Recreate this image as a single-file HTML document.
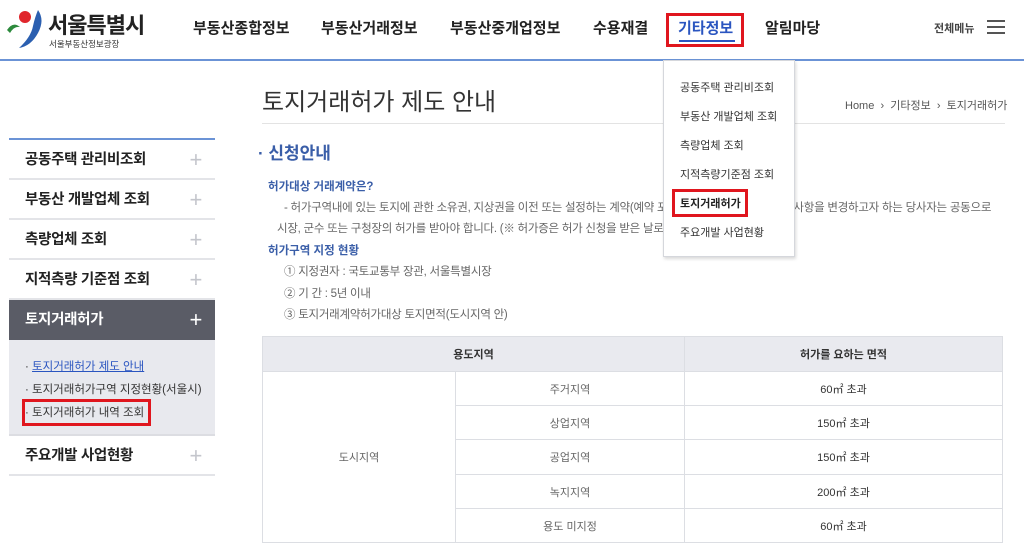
<!DOCTYPE html>
<html><head><meta charset="utf-8"><style>
*{margin:0;padding:0;box-sizing:border-box}
body{width:1024px;height:552px;overflow:hidden;background:#fff;font-family:"Liberation Sans","Noto Sans CJK KR",sans-serif;color:#333;position:relative}
.a{position:absolute;white-space:nowrap}
.nav{font-size:15px;font-weight:bold;color:#222;top:17px}
.side{position:absolute;left:9px;width:206px;height:40px;border-bottom:2px solid #e3e4e8;font-size:14.5px;font-weight:bold;color:#222;padding-left:16px;line-height:40px;letter-spacing:-0.3px}
.side .p{position:absolute;right:13px;top:0;color:#c4c6cc;font-weight:normal;font-size:22px}
.dd{font-size:11px;color:#333;left:680px}
.t{font-size:11.5px;color:#666;letter-spacing:-0.25px}
td{border:1px solid #dcdee3;text-align:center;font-size:11px;color:#666}
</style></head><body>
<!-- header -->
<svg class="a" style="left:4px;top:8px" width="46" height="42" viewBox="0 0 46 42">
<circle cx="21" cy="9" r="6" fill="#e0262c"/>
<path d="M3 22 Q9 13 16 19 Q10 18 6 25Z" fill="#2c8a3c"/>
<path d="M34 2 Q41 12 34 25 Q27 38 15 40 Q27 29 29 18 Q31 9 34 2Z" fill="#2b5fb0"/>
</svg>
<div class="a" style="left:48px;top:8px;font-size:22px;font-weight:bold;color:#222;letter-spacing:-1px">서울특별시</div>
<div class="a" style="left:49px;top:38px;font-size:8.5px;color:#333">서울부동산정보광장</div>
<div class="a nav" style="left:193px">부동산종합정보</div>
<div class="a nav" style="left:321px">부동산거래정보</div>
<div class="a nav" style="left:450px">부동산중개업정보</div>
<div class="a nav" style="left:593px">수용재결</div>
<div class="a nav" style="left:678px;color:#2a55c0">기타정보</div>
<div class="a" style="left:679px;top:40px;width:56px;height:2px;background:#2a55c0"></div>
<div class="a" style="left:666px;top:13px;width:78px;height:34px;border:3px solid #e0161e"></div>
<div class="a nav" style="left:765px">알림마당</div>
<div class="a" style="left:934px;top:20px;font-size:11px;font-weight:bold;color:#444">전체메뉴</div>
<div class="a" style="left:987px;top:20px;width:18px;height:2px;background:#555;box-shadow:0 6px 0 #555,0 12px 0 #555"></div>
<div class="a" style="left:0;top:59px;width:1024px;height:2px;background:#6b93d6"></div>
<!-- title -->
<div class="a" style="left:262px;top:82px;font-size:24px;color:#333">토지거래허가 제도 안내</div>
<div class="a" style="left:845px;top:97px;font-size:11px;color:#555">Home &nbsp;›&nbsp; 기타정보 &nbsp;›&nbsp; 토지거래허가</div>
<div class="a" style="left:262px;top:123px;width:743px;height:1px;background:#e3e3e3"></div>
<!-- sidebar -->
<div class="a" style="left:9px;top:138px;width:206px;height:2px;background:#6b93d6"></div>
<div class="side" style="top:140px">공동주택 관리비조회<span class="p">+</span></div>
<div class="side" style="top:180px">부동산 개발업체 조회<span class="p">+</span></div>
<div class="side" style="top:220px">측량업체 조회<span class="p">+</span></div>
<div class="side" style="top:260px">지적측량 기준점 조회<span class="p">+</span></div>
<div class="side" style="top:300px;background:#5a5c66;color:#fff;border-bottom:none">토지거래허가<span class="p" style="color:#fff">+</span></div>
<div class="a" style="left:9px;top:340px;width:206px;height:96px;background:#e8e9ee;border-bottom:2px solid #dcdde2"></div>
<div class="a" style="left:25px;top:358px;font-size:11.5px;color:#333">· <span style="color:#2a55c0;text-decoration:underline">토지거래허가 제도 안내</span></div>
<div class="a" style="left:25px;top:381px;font-size:11.5px;color:#333">· 토지거래허가구역 지정현황(서울시)</div>
<div class="a" style="left:25px;top:404px;font-size:11.5px;color:#333">· 토지거래허가 내역 조회</div>
<div class="a" style="left:22px;top:399px;width:129px;height:27px;border:3px solid #e0161e"></div>
<div class="side" style="top:436px">주요개발 사업현황<span class="p">+</span></div>
<!-- content -->
<div class="a" style="left:258px;top:139px;font-size:17px;font-weight:bold;color:#3a5ea8">· 신청안내</div>
<div class="a" style="left:268px;top:178px;font-size:11.5px;font-weight:bold;color:#3a5ea8">허가대상 거래계약은?</div>
<div class="a t" style="left:284px;top:199px">- 허가구역내에 있는 토지에 관한 소유권, 지상권을 이전 또는 설정하는 계약(예약 포함)을 체결하거나 허가받은 사항을 변경하고자 하는 당사자는 공동으로</div>
<div class="a t" style="left:277px;top:220px">시장, 군수 또는 구청장의 허가를 받아야 합니다. (※ 허가증은 허가 신청을 받은 날로부터</div>
<div class="a" style="left:268px;top:242px;font-size:11.5px;font-weight:bold;color:#3a5ea8">허가구역 지정 현황</div>
<div class="a t" style="left:284px;top:263px">① 지정권자 : 국토교통부 장관, 서울특별시장</div>
<div class="a t" style="left:284px;top:285px">② 기 간 : 5년 이내</div>
<div class="a t" style="left:284px;top:306px">③ 토지거래계약허가대상 토지면적(도시지역 안)</div>
<table class="a" style="left:262px;top:336px;width:741px;border-collapse:collapse">
<tr style="height:35px;background:#e9eaef"><td colspan="2" style="font-weight:bold;color:#333">용도지역</td><td style="font-weight:bold;color:#333">허가를 요하는 면적</td></tr>
<tr style="height:34px"><td rowspan="5" style="width:193px">도시지역</td><td style="width:229px">주거지역</td><td style="color:#333">60㎡ 초과</td></tr>
<tr style="height:34px"><td>상업지역</td><td style="color:#333">150㎡ 초과</td></tr>
<tr style="height:35px"><td>공업지역</td><td style="color:#333">150㎡ 초과</td></tr>
<tr style="height:34px"><td>녹지지역</td><td style="color:#333">200㎡ 초과</td></tr>
<tr style="height:34px"><td>용도 미지정</td><td style="color:#333">60㎡ 초과</td></tr>
</table>
<!-- dropdown -->
<div class="a" style="left:663px;top:60px;width:132px;height:197px;background:#fff;border:1px solid #d5d7dc;box-shadow:1px 2px 3px rgba(0,0,0,.15)"></div>
<div class="a dd" style="top:79px">공동주택 관리비조회</div>
<div class="a dd" style="top:108px">부동산 개발업체 조회</div>
<div class="a dd" style="top:137px">측량업체 조회</div>
<div class="a dd" style="top:166px">지적측량기준점 조회</div>
<div class="a dd" style="top:195px;font-weight:bold;color:#222">토지거래허가</div>
<div class="a" style="left:672px;top:189px;width:76px;height:28px;border:3px solid #e0161e"></div>
<div class="a dd" style="top:224px">주요개발 사업현황</div>
</body></html>
